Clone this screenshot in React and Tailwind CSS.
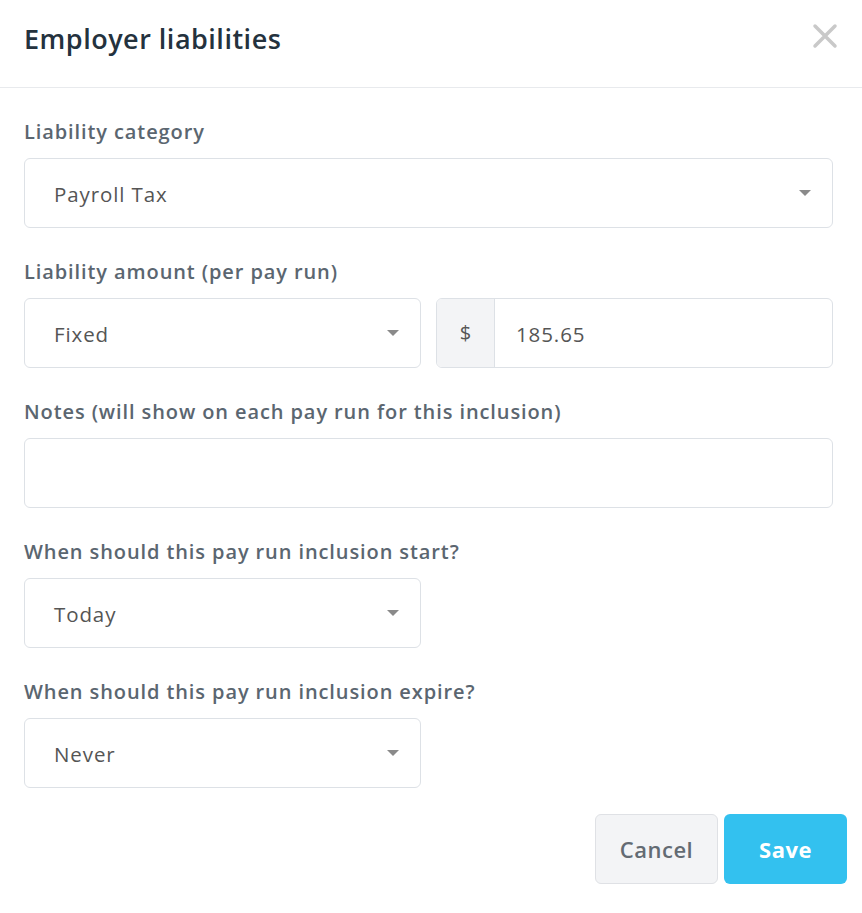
import React from 'react'

const font = { fontFamily: '"Open Sans", Lato, sans-serif' }

const Caret = () => (
  <span className="absolute right-[21px] top-1/2 -translate-y-1/2 w-0 h-0 border-l-[6px] border-r-[6px] border-t-[6px] border-l-transparent border-r-transparent border-t-[#8a8a8a]" />
)

const Select = ({ value, className = '' }) => (
  <div className={`relative h-[70px] rounded-md border border-[#dde1e6] bg-white flex items-center pl-[29px] pt-[3px] text-[20.5px] tracking-[0.9px] text-[#555] ${className}`}>
    {value}
    <Caret />
  </div>
)

const Field = ({ label, children, first }) => (
  <div className={first ? '' : 'mt-[31px]'}>
    <div className="h-[26px] leading-[26px] mb-[13px] text-[20px] tracking-[0.9px] font-semibold text-[#5b6670]">{label}</div>
    {children}
  </div>
)

export default function App() {
  return (
    <div className="w-[862px] h-[913px] bg-white" style={font}>
      {/* Header */}
      <div className="h-[88px] border-b border-[#e8eaed] flex items-center justify-between pl-6 pr-[24px]">
        <h1 className="text-[27px] tracking-[0.5px] font-semibold text-[#24323e] -mt-[8px]">Employer liabilities</h1>
        <svg width="26" height="26" viewBox="0 0 26 26" className="-mt-[16px]">
          <path d="M3 3 L23 23 M23 3 L3 23" stroke="#c9c9c9" strokeWidth="3.5" strokeLinecap="round" />
        </svg>
      </div>

      {/* Body */}
      <div className="pt-[31px] pl-6 pr-[29px]">
        <Field label="Liability category" first>
          <Select value="Payroll Tax" />
        </Field>

        <Field label="Liability amount (per pay run)">
          <div className="flex gap-[15px]">
            <Select value="Fixed" className="w-[397px]" />
            <div className="flex-1 h-[70px] flex rounded-md border border-[#dde1e6] overflow-hidden">
              <div className="w-[58px] bg-[#f3f4f6] border-r border-[#dde1e6] flex items-center justify-center text-[20px] text-[#555]">$</div>
              <div className="flex-1 flex items-center pl-[21px] pt-[2px] text-[20.5px] tracking-[0.9px] text-[#555]">185.65</div>
            </div>
          </div>
        </Field>

        <Field label="Notes (will show on each pay run for this inclusion)">
          <div className="h-[70px] rounded-md border border-[#dde1e6]" />
        </Field>

        <Field label="When should this pay run inclusion start?">
          <Select value="Today" className="w-[397px]" />
        </Field>

        <Field label="When should this pay run inclusion expire?">
          <Select value="Never" className="w-[397px]" />
        </Field>
      </div>

      {/* Footer */}
      <div className="flex justify-end gap-[6px] mt-[26px] pr-[15px]">
        <button className="w-[123px] h-[70px] rounded-md border border-[#dfe1e5] bg-[#f3f4f6] text-[22px] tracking-[0.5px] font-semibold text-[#636b73]">Cancel</button>
        <button className="w-[123px] h-[70px] rounded-md bg-[#33c1ef] text-[22px] tracking-[0.5px] font-bold text-white">Save</button>
      </div>
    </div>
  )
}
